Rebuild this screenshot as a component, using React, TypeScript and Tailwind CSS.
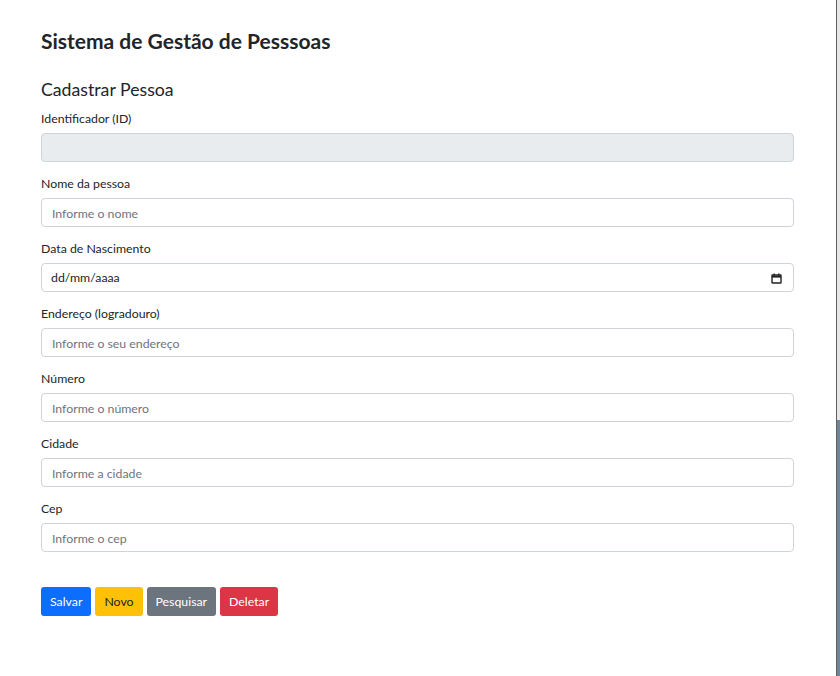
import { ReactNode } from "react";

const fields = [
  { label: "Nome da pessoa", placeholder: "Informe o nome" },
  { label: "Data de Nascimento", date: true },
  { label: "Endereço (logradouro)", placeholder: "Informe o seu endereço" },
  { label: "Número", placeholder: "Informe o número" },
  { label: "Cidade", placeholder: "Informe a cidade" },
  { label: "Cep", placeholder: "Informe o cep" },
];

function Group({ label, children }: { label: string; children: ReactNode }) {
  return (
    <div className="mb-[13px] flex flex-col">
      <label className="mb-[5px] h-[18px] text-[12.3px] leading-[18px] text-[#212529]">{label}</label>
      {children}
    </div>
  );
}

function CalendarIcon() {
  return (
    <svg width="11" height="11" viewBox="0 0 11 11" fill="none" stroke="#222" strokeWidth="1.4">
      <rect x="1" y="2" width="9" height="8" rx="0.5" />
      <path d="M1 3.6h9" strokeWidth="2" />
      <path d="M3.2 0.5v2M7.8 0.5v2" />
    </svg>
  );
}

const btn = "h-[29px] rounded-[3px] px-[9px] pt-[1px] text-[12.3px]";

export default function App() {
  return (
    <div
      className="flex min-h-[676px] w-full bg-white text-[#212529]"
      style={{ fontFamily: 'Lato, "Noto Sans", sans-serif' }}
    >
      <div className="flex-1 pl-[41px] pr-[42px] pt-[28px]">
        <h1 className="h-[26px] text-[21px] font-bold leading-[26px]">Sistema de Gestão de Pesssoas</h1>
        <h2 className="mt-[25px] h-[22px] text-[17.7px] leading-[22px]">Cadastrar Pessoa</h2>
        <form className="mt-[9px]">
          <Group label="Identificador (ID)">
            <input
              disabled
              className="h-[29px] w-full rounded-[4px] border border-[#ced4da] bg-[#e9ecef] px-[10px] text-[12.3px]"
            />
          </Group>
          {fields.map((f) => (
            <Group key={f.label} label={f.label}>
              {f.date ? (
                <div className="flex h-[29px] w-full items-center justify-between rounded-[4px] border border-[#ced4da] bg-white pl-[9px] pr-[11px] pt-[1px] text-[12.3px] text-[#212529]">
                  <span>dd/mm/aaaa</span>
                  <CalendarIcon />
                </div>
              ) : (
                <input
                  placeholder={f.placeholder}
                  className="h-[29px] w-full rounded-[4px] border border-[#ced4da] bg-white px-[10px] pt-[1px] text-[12.3px] text-[#212529] outline-none placeholder:text-[#6c757d]"
                />
              )}
            </Group>
          ))}
          <div className="mt-[35px] flex gap-[4px]">
            <button type="button" className={`${btn} bg-[#0d6efd] text-white`}>
              Salvar
            </button>
            <button type="button" className={`${btn} bg-[#ffc107] text-[#212529]`}>
              Novo
            </button>
            <button type="button" className={`${btn} bg-[#6c757d] text-white`}>
              Pesquisar
            </button>
            <button type="button" className={`${btn} bg-[#dc3545] text-white`}>
              Deletar
            </button>
          </div>
        </form>
      </div>
      <div className="flex w-[4px] border-l border-[#5f5f5f] flex-col">
        <div className="h-[420px] bg-[#e6e6e6]" />
        <div className="flex-1 bg-[#6f8599]" />
      </div>
    </div>
  );
}
